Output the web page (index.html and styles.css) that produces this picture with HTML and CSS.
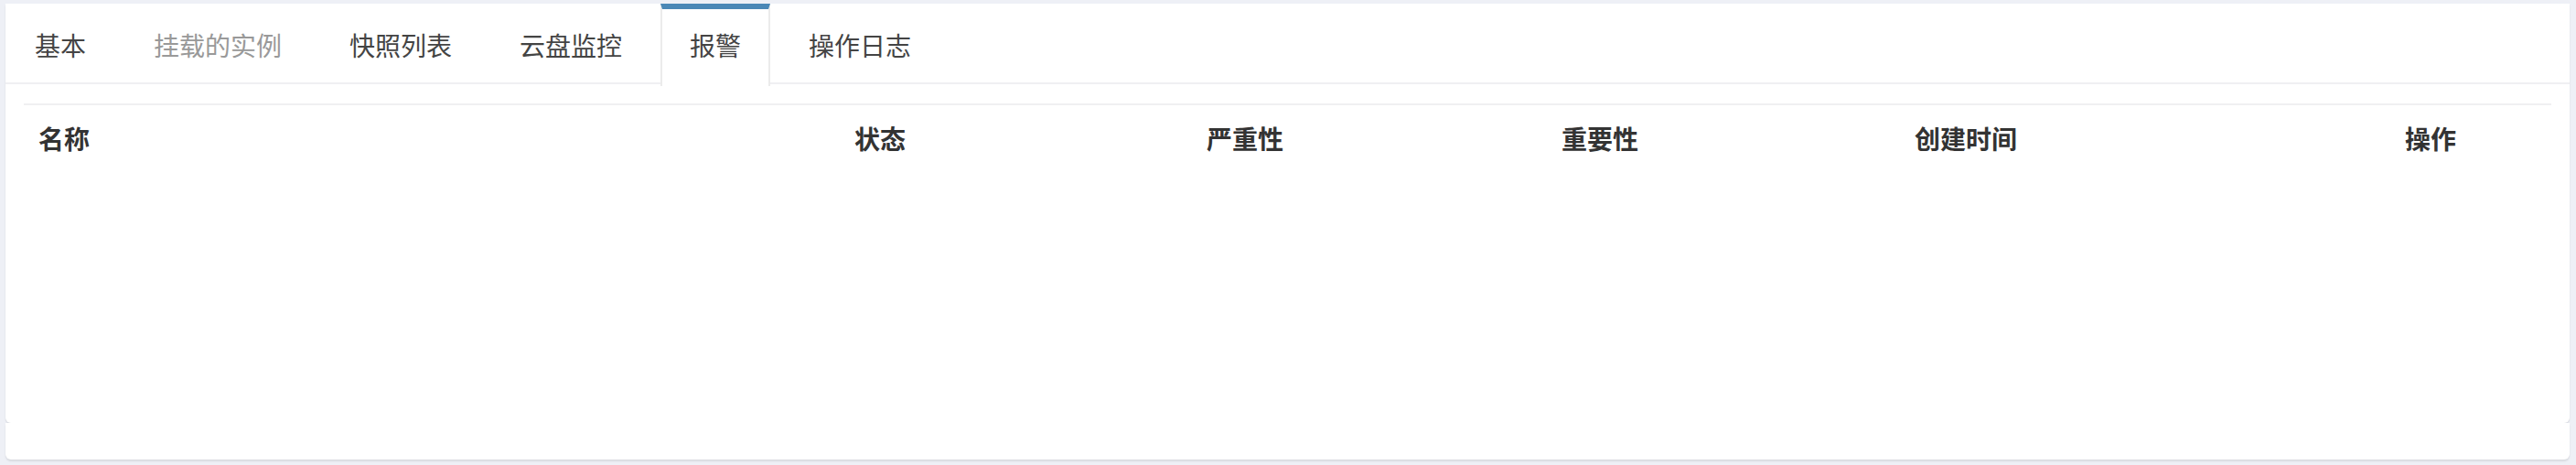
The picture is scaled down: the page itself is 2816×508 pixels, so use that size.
FILE: index.html
```html
<!DOCTYPE html>
<html lang="zh-CN">
<head>
<meta charset="utf-8">
<title>云盘详情 - 报警</title>
<link rel="stylesheet" href="styles.css">
</head>
<body>
<div class="page">
  <div class="card card-main">
    <ul class="tabs">
      <li class="tab">基本</li>
      <li class="tab disabled">挂载的实例</li>
      <li class="tab">快照列表</li>
      <li class="tab">云盘监控</li>
      <li class="tab active">报警</li>
      <li class="tab">操作日志</li>
    </ul>
    <div class="tab-body">
      <table class="grid">
        <colgroup>
          <col class="c-name">
          <col class="c-status">
          <col class="c-sev">
          <col class="c-imp">
          <col class="c-time">
          <col class="c-op">
        </colgroup>
        <thead>
          <tr>
            <th>名称</th>
            <th>状态</th>
            <th>严重性</th>
            <th>重要性</th>
            <th>创建时间</th>
            <th>操作</th>
          </tr>
        </thead>
        <tbody></tbody>
      </table>
    </div>
  </div>
  <div class="card card-foot"></div>
</div>
</body>
</html>
```
FILE: styles.css
```css
* { box-sizing: border-box; }
html, body {
  margin: 0;
  padding: 0;
  background: #eef0f6;
  font-family: "Noto Sans CJK SC", "Liberation Sans", sans-serif;
}
.page {
  height: 508px;
  padding: 4px 7px 6px 6px;
  display: flex;
  flex-direction: column;
  border-top: 0;
}
.card {
  background: #fff;
  border-radius: 0 0 6px 6px;
  box-shadow: 0 2px 2px rgba(0, 0, 0, 0.09);
}
.card-main {
  height: 458px;
  display: flex;
  flex-direction: column;
}
.card-foot {
  height: 40px;
}
.tabs {
  list-style: none;
  margin: 0;
  padding: 0;
  display: flex;
  gap: 10px;
  border-bottom: 2px solid #f0f0f2;
  height: 88px;
}
.tab {
  height: 88px;
  margin-bottom: -2px;
  padding: 0 30px;
  border: 2px solid transparent;
  border-top: 6px solid transparent;
  border-bottom: 0;
  font-size: 28px;
  line-height: 78px;
  color: #444;
  white-space: nowrap;
}
.tab:first-child { border-left: 0; padding-left: 32px; }
.tab.disabled { color: #999; }
.tab.active {
  background: #fff;
  border-color: #ebebeb;
  border-top-color: #4b88b6;
  height: 90px;
}
.tab-body {
  padding: 21px 20px 0 20px;
}
.grid {
  width: 100%;
  border-collapse: collapse;
  table-layout: fixed;
  border-top: 2px solid #f0f0f2;
}
.c-name { width: 892px; }
.c-status { width: 385px; }
.c-sev { width: 388px; }
.c-imp { width: 386px; }
.c-time { width: 536px; }
.grid th {
  text-align: left;
  font-weight: 700;
  font-size: 28px;
  line-height: 40px;
  padding: 16px 16px;
  color: #333;
}
```
